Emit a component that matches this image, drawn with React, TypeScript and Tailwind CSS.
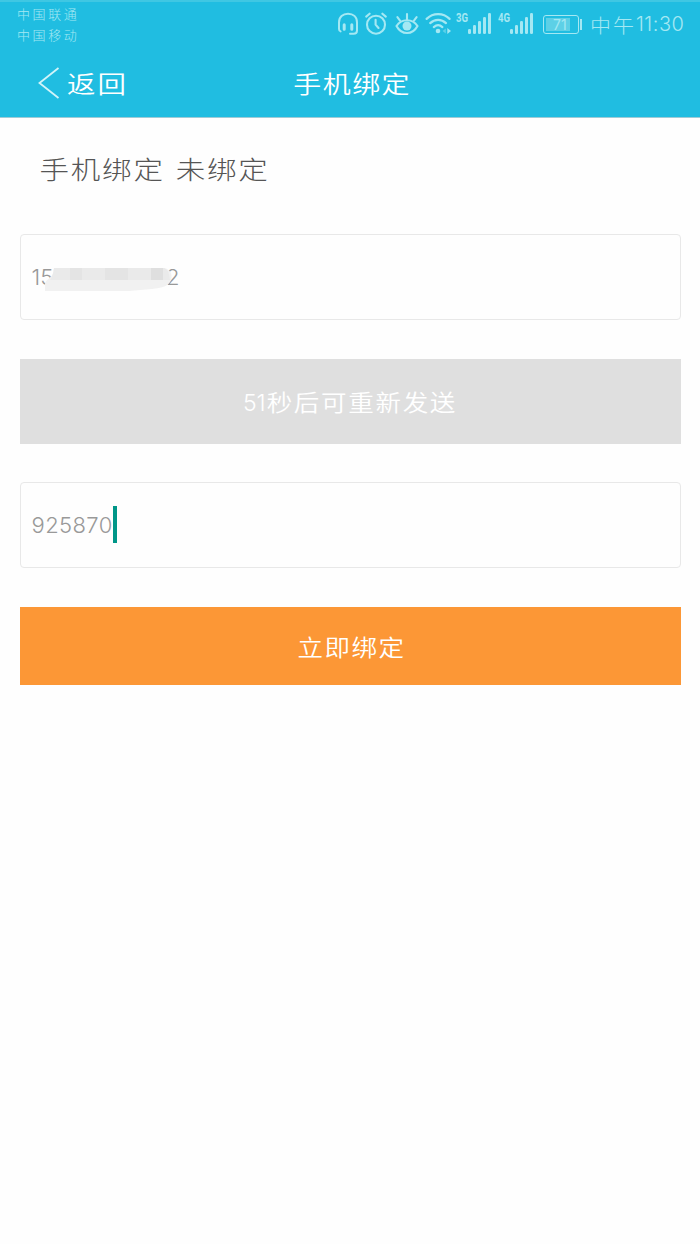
import type { ReactNode } from 'react';

function HeadsetIcon() {
  return (
    <svg width="22" height="24" viewBox="0 0 22 24" fill="none" stroke="currentColor" strokeWidth="2" strokeLinecap="round">
      <path d="M3.6 19.4C2.4 19 2 18.2 2 17V10.5C2 5 5.8 1.8 11 1.8S20 5 20 10.5V18.5C20 21 18.8 21.8 16.6 21.8H13" />
      <path d="M7.2 12.8V17.2M14.8 12.8V17.2" strokeWidth="3" />
    </svg>
  );
}

function AlarmIcon() {
  return (
    <svg width="22" height="24" viewBox="0 0 22 24" fill="none" stroke="currentColor" strokeWidth="2.1" strokeLinecap="round">
      <circle cx="11" cy="12.7" r="9" />
      <path d="M10.6 7.7V12.7L13.5 16M1.2 4.6L4.6 1.7M20.8 4.6L17.4 1.7" />
    </svg>
  );
}

function EyeIcon() {
  return (
    <svg width="24" height="24" viewBox="0 0 24 24" fill="none" stroke="currentColor" strokeWidth="2.1" strokeLinecap="round">
      <path d="M1.5 14C6.5 6.4 17.5 6.4 22.5 14C17.5 23.4 6.5 23.4 1.5 14Z" />
      <circle cx="12" cy="14" r="4.5" fill="currentColor" stroke="none" />
      <path d="M12 2V7.5M2.4 5.2L5 8.6M21.6 5.2L19 8.6" />
    </svg>
  );
}

function WifiIcon() {
  return (
    <svg width="27" height="24" viewBox="0 0 27 24" fill="none" stroke="currentColor" strokeWidth="2.2" strokeLinecap="round">
      <path d="M1.6 6.9C8 .5 18.2 .5 24.6 6.9M5.2 11.1C9.8 6.7 16.4 6.7 21 11.1M8.8 15.1C11.6 12.6 14.6 12.6 17.4 15.1" />
      <circle cx="13" cy="19" r="2.3" fill="currentColor" stroke="none" />
      <path d="M20.8 16.5V21.5L17.5 19Z" fill="currentColor" stroke="none" opacity=".45" />
      <path d="M22.3 16V22L26 19Z" fill="currentColor" stroke="none" />
    </svg>
  );
}

function Signal({ label }: { label: string }) {
  return (
    <div className="flex h-6">
      <span className="w-[11px] origin-left scale-x-[.8] font-[Roboto] text-[12px] font-bold leading-[13px]">{label}</span>
      <svg width="24" height="24" viewBox="0 0 24 24" fill="currentColor">
        <rect x="1" y="17" width="3" height="5" rx="1.3" />
        <rect x="6" y="13" width="3" height="9" rx="1.3" />
        <rect x="11" y="9" width="3" height="13" rx="1.3" />
        <rect x="16" y="5" width="3" height="17" rx="1.3" />
        <rect x="21" y="1" width="3" height="21" rx="1.3" />
      </svg>
    </div>
  );
}

function Battery() {
  return (
    <div className="flex items-center gap-px">
      <div className="flex h-[19px] w-[36px] rounded-[3px] border border-[#a4e8f3] p-[2px]">
        <div className="flex w-[24px] items-center bg-[#5dd0e6] pl-[7px] font-[Inter] text-[14px] font-normal">71</div>
      </div>
      <div className="h-[11px] w-[2px] bg-[#a4e8f3]" />
    </div>
  );
}

function StatusBar() {
  return (
    <div className="flex h-[49px] text-[#a4e8f3]">
      <div className="w-[320px] pl-[17px] pt-[4px] text-[13px] leading-[21px] tracking-[2.6px]">
        <p>中国联通</p>
        <p>中国移动</p>
      </div>
      <div className="flex h-[48px] flex-1 items-center pl-[17px]">
        <HeadsetIcon />
        <div className="ml-[6px]"><AlarmIcon /></div>
        <div className="ml-[8px]"><EyeIcon /></div>
        <div className="ml-[6px]"><WifiIcon /></div>
        <div className="ml-[4px]"><Signal label="3G" /></div>
        <div className="ml-[7px]"><Signal label="4G" /></div>
        <div className="ml-[10px]"><Battery /></div>
        <div className="ml-[8px] flex items-center">
          <span className="scale-y-90 pt-[5px] text-[21px] tracking-[2px]">中午</span>
          <span className="font-[Inter] text-[20px] tracking-[.5px]">11:30</span>
        </div>
      </div>
    </div>
  );
}

function NavBar() {
  return (
    <div className="grid h-[68px] grid-cols-3 items-center text-white">
      <div className="flex items-center pl-[38px]">
        <svg width="22" height="32" viewBox="0 0 22 32" fill="none" stroke="#d2f4f9" strokeWidth="1.8">
          <path d="M20.5 1L1.5 16L20.5 31" />
        </svg>
        <span className="ml-[7px] scale-y-[.85] pt-[5px] text-[28.5px] font-[350] tracking-[2px]">返回</span>
      </div>
      <h1 className="scale-y-[.86] pl-[60px] pt-[5px] text-[28px] font-[350] tracking-[1.4px] whitespace-nowrap">手机绑定</h1>
    </div>
  );
}

function Field({ children }: { children: ReactNode }) {
  return (
    <div className="flex h-[86px] items-center rounded-[4px] border border-[#e8e8e8] pl-[11px] font-[Inter] text-[22px] text-[#999]">
      {children}
    </div>
  );
}

// Hides the middle digits of the phone number
function NumberMask() {
  return (
    <svg className="absolute left-[13px] top-1/2 -translate-y-1/2" width="130" height="30" viewBox="0 0 130 30">
      <path d="M9 6H119C125 7 128 12 126 18C124 24 117 26 107 27L84 29H0V22C0 18 5 17 8 12Z" fill="#f1f1f1" />
      <path d="M9 6H119Q124 7 125 18H5Q8 14 9 6Z" fill="#eaeaea" />
      <path d="M25 6H37V18H25ZM60 6H83V18H60Z" fill="#e4e4e4" />
      <path d="M106 6H118V18H106Z" fill="#dfdfdf" />
    </svg>
  );
}

export default function App() {
  return (
    <div className="min-h-[1244px] w-[700px] bg-[#fefefe] font-['Liberation_Sans','Noto_Sans_CJK_SC',sans-serif] font-light">
      <header className="border-t-2 border-b border-t-[#3fc7e3] border-b-[#9fcbd6] bg-[#20bde1]">
        <div>
          <div className="-mt-[2px]"><StatusBar /></div>
          <NavBar />
        </div>
      </header>

      <main className="px-[19.5px]">
        <h2 className="flex h-[116px] items-start pl-[20px] pt-[32px] text-[29.5px] leading-[40px] tracking-[1.8px] text-[#555]">
          <span className="scale-y-[.85]">手机绑定</span>
          <span className="ml-[11px] scale-y-[.85]">未绑定</span>
        </h2>

        <div className="flex flex-col gap-[38.7px]">
          <Field>
            <div className="relative flex h-[40px] w-[150px] items-center justify-between">
              <span>15</span>
              <span className="pr-[2px]">2</span>
              <NumberMask />
            </div>
          </Field>

          <button className="flex h-[85px] items-center justify-center bg-[#dfdfdf] pt-[4px] text-[25.5px] font-[350] tracking-[1.7px] text-white">
            <span className="mr-px font-[Inter] text-[23px] tracking-normal">51</span>
            <span className="scale-y-[.87]">秒后可重新发送</span>
          </button>

          <Field>
            <span className="tracking-[.4px]">925870</span>
            <span className="-mt-[1px] h-[37px] w-[4px] bg-[#009688]" />
          </Field>

          <button className="flex h-[78px] items-center justify-center bg-[#fc9736] pl-[3px] pt-[5px] text-[25.5px] font-[350] tracking-[1.5px] text-white">
            <span className="scale-y-[.87]">立即绑定</span>
          </button>
        </div>
      </main>
    </div>
  );
}
